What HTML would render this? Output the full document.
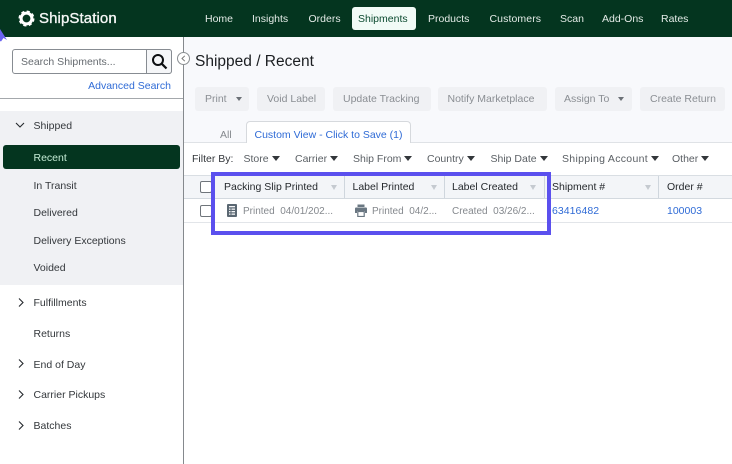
<!DOCTYPE html>
<html><head><meta charset="utf-8"><style>
*{box-sizing:border-box}
html,body{margin:0;padding:0}
body{width:732px;height:464px;overflow:hidden;position:relative;background:#fff;font-family:"Liberation Sans",sans-serif;font-size:11px;color:#2b2f33}
.a{position:absolute;white-space:nowrap}
.n{position:absolute;top:12px;font-size:10.5px;color:#e4ebe7;line-height:15px}
.b{position:absolute;top:87px;height:24px;background:#f0f1f4;border-radius:3px;color:#8a8e93;font-size:10.5px;line-height:25px;padding-left:10px;white-space:nowrap}
.t{position:absolute;left:33.5px;font-size:10.5px;line-height:15px;color:#33373b;white-space:nowrap}
.f{position:absolute;top:152px;font-size:10.5px;line-height:14px;color:#5a5f64;white-space:nowrap}
.f:after{content:"";display:inline-block;margin-left:3px;vertical-align:1px;border-left:4px solid transparent;border-right:4px solid transparent;border-top:5px solid #33373b}
.car:after{content:"";display:inline-block;margin-left:9px;vertical-align:1px;border-left:3.5px solid transparent;border-right:3.5px solid transparent;border-top:4.5px solid #6b7076}
.h{position:absolute;top:180px;font-size:10.5px;line-height:15px;color:#25292d;white-space:nowrap}
.s{position:absolute;top:185px;border-left:3.5px solid transparent;border-right:3.5px solid transparent;border-top:5px solid #c5cad0}
.d{position:absolute;top:176px;width:1px;height:22px;background:#cfd6dd}
.c{position:absolute;font-size:10px;top:204px;line-height:15px;color:#85898e;white-space:nowrap}
.k{position:absolute;width:12px;height:12px;border:1px solid #6f757b;border-radius:2px;background:#fff;left:200px}
.l{color:#2f6bd6}
svg{position:absolute}
</style></head><body>
<div class="a" style="left:0;top:0;width:732px;height:37px;background:#04351f"></div>
<svg style="left:18px;top:10px" width="17" height="17" viewBox="0 0 17 17"><circle cx="8.5" cy="8.5" r="5.4" fill="none" stroke="#fff" stroke-width="3"/><circle cx="8.5" cy="8.5" r="7.2" fill="none" stroke="#fff" stroke-width="1.6" stroke-dasharray="3.2 2.45"/></svg>
<div class="a" style="left:39px;top:9px;font-size:15px;line-height:20px;letter-spacing:.1px;color:#f4f6f5;-webkit-text-stroke:.35px #f4f6f5">ShipStation</div>
<svg style="left:0;top:28px" width="9" height="14" viewBox="0 0 9 14"><path d="M0 1L7 12L3.5 10L1 13.5L0 13Z" fill="#6a62f0"/></svg>
<div class="n" style="left:205px">Home</div>
<div class="n" style="left:252px">Insights</div>
<div class="n" style="left:308.5px">Orders</div>
<div class="a" style="left:352px;top:7px;width:64px;height:23px;background:#f1fbf6;border-radius:3px"></div>
<div class="n" style="left:358px;color:#0b4a2f">Shipments</div>
<div class="n" style="left:428px">Products</div>
<div class="n" style="left:489.5px;letter-spacing:.1px">Customers</div>
<div class="n" style="left:560px">Scan</div>
<div class="n" style="left:602px">Add-Ons</div>
<div class="n" style="left:661px">Rates</div>

<div class="a" style="left:184px;top:37px;width:548px;height:106px;background:#f8f9fc"></div>
<div class="a" style="left:183px;top:37px;width:1px;height:427px;background:#85898d"></div>

<div class="a" style="left:12px;top:49px;width:160px;height:25px;border:1px solid #878c92;border-radius:3px;background:#fff"></div>
<div class="a" style="left:146px;top:49px;width:26px;height:25px;border:1px solid #878c92;border-radius:0 3px 3px 0;background:#f5f6f8"></div>
<div class="a" style="left:21px;top:55px;font-size:10.5px;line-height:15px;color:#666b70">Search Shipments...</div>
<svg style="left:151px;top:53px" width="17" height="17" viewBox="0 0 17 17"><circle cx="7" cy="7" r="5" fill="none" stroke="#0d0f11" stroke-width="2"/><path d="M10.8 10.8L15.5 15.5" stroke="#0d0f11" stroke-width="2.2"/></svg>
<div class="a" style="right:561px;top:79px;font-size:10.5px;line-height:15px;color:#2f6bd6">Advanced Search</div>
<div class="a" style="left:0;top:98px;width:183px;height:1px;background:#a4a8ac"></div>
<svg style="left:176px;top:51px" width="15" height="15" viewBox="0 0 15 15"><circle cx="7.5" cy="7.5" r="6" fill="#fff" stroke="#8a8e92"/><path d="M8.8 4.8L6 7.5L8.8 10.2" fill="none" stroke="#777" stroke-width="1"/></svg>

<div class="a" style="left:0;top:111px;width:183px;height:174px;background:#f0f1f4"></div>
<div class="a" style="left:3px;top:145px;width:177px;height:24px;background:#04351f;border-radius:3px"></div>
<svg style="left:14px;top:121px" width="12" height="8" viewBox="0 0 12 8"><path d="M2 2L6 6L10 2" fill="none" stroke="#25292d" stroke-width="1.1"/></svg>
<div class="t" style="top:119px">Shipped</div>
<div class="t" style="top:151px;color:#c5ecd6">Recent</div>
<div class="t" style="top:179px">In Transit</div>
<div class="t" style="top:206px">Delivered</div>
<div class="t" style="top:234px">Delivery Exceptions</div>
<div class="t" style="top:261px">Voided</div>
<div class="t" style="top:296px">Fulfillments</div>
<div class="t" style="top:327px">Returns</div>
<div class="t" style="top:358px">End of Day</div>
<div class="t" style="top:388px">Carrier Pickups</div>
<div class="t" style="top:419px">Batches</div>
<svg style="left:16.5px;top:297px" width="8" height="11" viewBox="0 0 8 11"><path d="M2 1.5L6 5.5L2 9.5" fill="none" stroke="#25292d" stroke-width="1.1"/></svg>
<svg style="left:16.5px;top:358px" width="8" height="11" viewBox="0 0 8 11"><path d="M2 1.5L6 5.5L2 9.5" fill="none" stroke="#25292d" stroke-width="1.1"/></svg>
<svg style="left:16.5px;top:389px" width="8" height="11" viewBox="0 0 8 11"><path d="M2 1.5L6 5.5L2 9.5" fill="none" stroke="#25292d" stroke-width="1.1"/></svg>
<svg style="left:16.5px;top:420px" width="8" height="11" viewBox="0 0 8 11"><path d="M2 1.5L6 5.5L2 9.5" fill="none" stroke="#25292d" stroke-width="1.1"/></svg>

<div class="a" style="left:195px;top:51px;font-size:15.5px;line-height:21px;color:#1b1e21">Shipped / Recent</div>
<div class="b car" style="left:195px;width:54px">Print</div>
<div class="b" style="left:257px;width:68px">Void Label</div>
<div class="b" style="left:333px;width:98px">Update Tracking</div>
<div class="b" style="left:438px;width:109px;padding-left:9.5px">Notify Marketplace</div>
<div class="b car" style="left:555px;width:77px;padding-left:9px">Assign To</div>
<div class="b" style="left:640px;width:85px">Create Return</div>

<div class="a" style="left:184px;top:142px;width:548px;height:1px;background:#dfe2e6"></div>
<div class="a" style="left:220px;top:128px;font-size:10.5px;line-height:14px;color:#85898e">All</div>
<div class="a" style="left:246px;top:121px;width:165px;height:22px;background:#fff;border:1px solid #d6d9dd;border-bottom:0;border-radius:4px 4px 0 0"></div>
<div class="a" style="left:254.5px;top:128px;font-size:10.5px;line-height:14px;color:#2f6bd6">Custom View - Click to Save (1)</div>

<div class="a" style="left:192px;top:152px;font-size:10.5px;line-height:14px;color:#33373b">Filter By:</div>
<div class="f" style="left:243.5px">Store</div>
<div class="f" style="left:295px">Carrier</div>
<div class="f" style="left:353px">Ship From</div>
<div class="f" style="left:427px">Country</div>
<div class="f" style="left:490.5px">Ship Date</div>
<div class="f" style="left:562px;letter-spacing:.3px">Shipping Account</div>
<div class="f" style="left:672px">Other</div>

<div class="a" style="left:184px;top:175px;width:548px;height:24px;background:#f3f5f8;border-top:1px solid #d9dee3;border-bottom:1px solid #d3d9df"></div>
<div class="a" style="left:184px;top:222px;width:548px;height:1px;background:#e2e5e9"></div>
<div class="k" style="top:181px"></div>
<div class="k" style="top:205px"></div>
<div class="d" style="left:344px"></div>
<div class="d" style="left:444px"></div>
<div class="d" style="left:544px"></div>
<div class="d" style="left:658px"></div>

<div class="h" style="left:224px">Packing Slip Printed</div><div class="s" style="left:331px"></div>
<div class="h" style="left:352.5px">Label Printed</div><div class="s" style="left:431px"></div>
<div class="h" style="left:452px">Label Created</div><div class="s" style="left:530px"></div>
<div class="h" style="left:552px">Shipment #</div><div class="s" style="left:645px"></div>
<div class="h" style="left:667px">Order #</div>

<svg style="left:227px;top:204px" width="10" height="13" viewBox="0 0 10 13"><rect width="10" height="13" rx="1" fill="#5a6772"/><g fill="#f4f5f7"><rect x="2" y="2" width="6" height="1.3"/><rect x="2" y="4.5" width="1.5" height="1.3"/><rect x="4.5" y="4.5" width="3.5" height="1.3"/><rect x="2" y="7" width="1.5" height="1.3"/><rect x="4.5" y="7" width="3.5" height="1.3"/><rect x="2" y="9.5" width="1.5" height="1.3"/><rect x="4.5" y="9.5" width="3.5" height="1.3"/></g></svg>
<svg style="left:354.5px;top:204px" width="12" height="13" viewBox="0 0 12 13"><path d="M2.5 0.5H9.5V3H2.5Z" fill="#6a7782"/><path d="M1 3.5H11Q12 3.5 12 4.5V9H10V7H2V9H0V4.5Q0 3.5 1 3.5Z" fill="#6a7782"/><rect x="2.8" y="7.5" width="6.4" height="5" fill="none" stroke="#6a7782" stroke-width="1.2"/></svg>
<div class="c" style="left:243px">Printed&nbsp; 04/01/202...</div>
<div class="c" style="left:372px">Printed&nbsp; 04/2...</div>
<div class="c" style="left:452px">Created&nbsp; 03/26/2...</div>
<div class="c l" style="left:552px;font-size:10.5px;letter-spacing:.05px">63416482</div>
<div class="c l" style="left:667px;font-size:10.5px">100003</div>

<div class="a" style="left:211px;top:172px;width:340px;height:63px;border:4px solid #5b50ee"></div>
</body></html>
